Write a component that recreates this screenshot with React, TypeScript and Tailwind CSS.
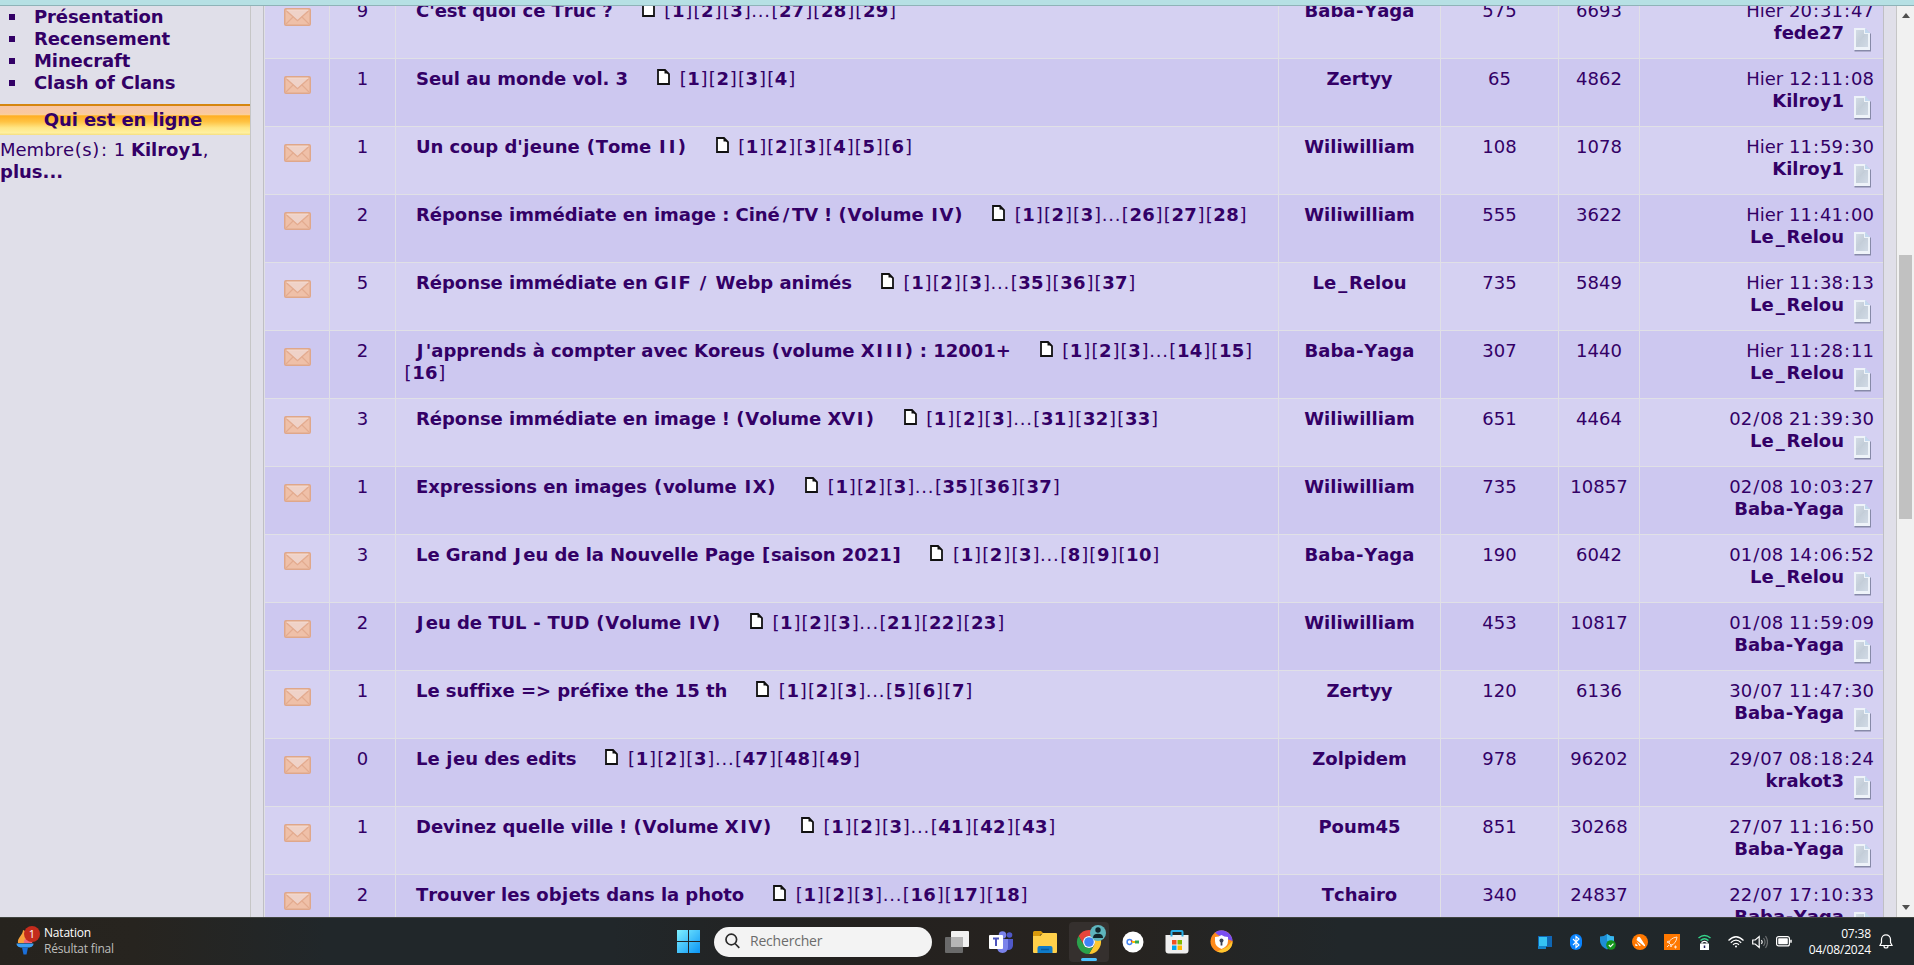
import React from 'react'

type Topic = {
  replies: number
  title: string
  pages: (number | string)[]
  author: string
  posts: number
  views: number
  date: string
  last: string
}

const topics: Topic[] = [
  { replies: 9, title: "C'est quoi ce Truc ?", pages: [1, 2, 3, '...', 27, 28, 29], author: 'Baba-Yaga', posts: 575, views: 6693, date: 'Hier 20:31:47', last: 'fede27' },
  { replies: 1, title: 'Seul au monde vol. 3', pages: [1, 2, 3, 4], author: 'Zertyy', posts: 65, views: 4862, date: 'Hier 12:11:08', last: 'Kilroy1' },
  { replies: 1, title: "Un coup d'jeune (Tome II)", pages: [1, 2, 3, 4, 5, 6], author: 'Wiliwilliam', posts: 108, views: 1078, date: 'Hier 11:59:30', last: 'Kilroy1' },
  { replies: 2, title: 'Réponse immédiate en image : Ciné/TV ! (Volume IV)', pages: [1, 2, 3, '...', 26, 27, 28], author: 'Wiliwilliam', posts: 555, views: 3622, date: 'Hier 11:41:00', last: 'Le_Relou' },
  { replies: 5, title: 'Réponse immédiate en GIF / Webp animés', pages: [1, 2, 3, '...', 35, 36, 37], author: 'Le_Relou', posts: 735, views: 5849, date: 'Hier 11:38:13', last: 'Le_Relou' },
  { replies: 2, title: "J'apprends à compter avec Koreus (volume XIII) : 12001+", pages: [1, 2, 3, '...', 14, 15, 16], author: 'Baba-Yaga', posts: 307, views: 1440, date: 'Hier 11:28:11', last: 'Le_Relou' },
  { replies: 3, title: 'Réponse immédiate en image ! (Volume XVI)', pages: [1, 2, 3, '...', 31, 32, 33], author: 'Wiliwilliam', posts: 651, views: 4464, date: '02/08 21:39:30', last: 'Le_Relou' },
  { replies: 1, title: 'Expressions en images (volume IX)', pages: [1, 2, 3, '...', 35, 36, 37], author: 'Wiliwilliam', posts: 735, views: 10857, date: '02/08 10:03:27', last: 'Baba-Yaga' },
  { replies: 3, title: 'Le Grand Jeu de la Nouvelle Page [saison 2021]', pages: [1, 2, 3, '...', 8, 9, 10], author: 'Baba-Yaga', posts: 190, views: 6042, date: '01/08 14:06:52', last: 'Le_Relou' },
  { replies: 2, title: 'Jeu de TUL - TUD (Volume IV)', pages: [1, 2, 3, '...', 21, 22, 23], author: 'Wiliwilliam', posts: 453, views: 10817, date: '01/08 11:59:09', last: 'Baba-Yaga' },
  { replies: 1, title: 'Le suffixe => préfixe the 15 th', pages: [1, 2, 3, '...', 5, 6, 7], author: 'Zertyy', posts: 120, views: 6136, date: '30/07 11:47:30', last: 'Baba-Yaga' },
  { replies: 0, title: 'Le jeu des edits', pages: [1, 2, 3, '...', 47, 48, 49], author: 'Zolpidem', posts: 978, views: 96202, date: '29/07 08:18:24', last: 'krakot3' },
  { replies: 1, title: 'Devinez quelle ville ! (Volume XIV)', pages: [1, 2, 3, '...', 41, 42, 43], author: 'Poum45', posts: 851, views: 30268, date: '27/07 11:16:50', last: 'Baba-Yaga' },
  { replies: 2, title: 'Trouver les objets dans la photo', pages: [1, 2, 3, '...', 16, 17, 18], author: 'Tchairo', posts: 340, views: 24837, date: '22/07 17:10:33', last: 'Baba-Yaga' },
]

const boldSpacing: Record<string, string> = {
  I: 'px-[1.55px]',
  J: 'pl-[0.8px] pr-[2.4px]',
  j: 'px-[0.5px]',
  '(': 'px-[0.75px]',
  ')': 'px-[0.75px]',
  '[': 'px-[0.75px]',
  ']': 'px-[0.75px]',
  '/': 'px-[2.9px]',
  '-': 'px-[0.6px]',
  _: 'tracking-[1.9px] pl-[1.9px]',
  '!': '-mx-[0.5px]',
}

const regularSpacing: Record<string, string> = {
  '(': 'px-[0.6px]',
  ')': 'px-[0.6px]',
  '[': 'px-[0.58px]',
  ']': 'px-[0.58px]',
  '/': 'px-[1.05px]',
  ':': 'px-[1.05px]',
}

function Text({ children, bold }: { children: string; bold?: boolean }) {
  const spacing = bold ? boldSpacing : regularSpacing
  const parts = children.split(bold ? /([IJj()[\]/\-_!])/ : /([()[\]/:])/)
  return (
    <span className={bold ? 'font-bold' : 'font-normal'}>
      {parts.map((part, i) => (spacing[part] ? <span key={i} className={spacing[part]}>{part}</span> : part))}
    </span>
  )
}

function Envelope() {
  return (
    <svg width="27" height="18" viewBox="0 0 27 18">
      <rect x="0.75" y="0.75" width="25.5" height="16.5" rx="1.2" fill="#efc0a8" stroke="#dfa78a" strokeWidth="1.5" />
      <path d="M2 16 9.5 8.5M25 16 17.5 8.5" stroke="#e3ab90" strokeWidth="1.2" />
      <path d="M3 2.5h21L13.5 12z" fill="#efd2c8" />
      <path d="M2.5 3 13.5 12.8 24.5 3" fill="none" stroke="#e3ab90" strokeWidth="1.2" />
      <path d="M3 2.2h21" stroke="#f3ddd6" />
    </svg>
  )
}

function PageIcon() {
  return (
    <svg className="inline-block align-baseline" width="13" height="16" viewBox="0 0 13 16">
      <path d="M1 1h7l4 4v10H1z" fill="#fff" stroke="#111" strokeWidth="1.8" />
      <path d="M7.500 1v3.500H12z" fill="#111" />
    </svg>
  )
}

function LastPostIcon() {
  return (
    <svg width="19" height="25" viewBox="0 0 19 25">
      <defs>
        <linearGradient id="sheet" x1="0" y1="0" x2="1" y2="1">
          <stop offset="0" stopColor="#d3dce6" />
          <stop offset="0.5" stopColor="#c3cdd8" />
          <stop offset="1" stopColor="#e0e8f3" />
        </linearGradient>
      </defs>
      <path d="M1.500 2h11.500l5 5v17.500H1.500z" fill="#878aa8" />
      <path d="M1 1h11l5 5v17H1z" fill="#eef3f9" />
      <path d="M3 3h8v4h4v13H3z" fill="url(#sheet)" />
      <path d="M3 14c5 0 8-3 9-7h3v13H3z" fill="#c6d1dc" opacity="0.6" />
      <path d="M12 1v5h5z" fill="#c3d8ef" />
    </svg>
  )
}

function TopicRow({ topic, odd }: { topic: Topic; odd: boolean }) {
  const bg = odd ? 'bg-[#cdc8f0]' : 'bg-[#d5d1f2]'
  return (
    <div className="grid h-[68px] shrink-0 grid-cols-[64px_65px_882px_161px_117px_80px_243px] gap-x-px pb-px">
      <div className={`flex justify-center pt-[17px] ${bg}`}>
        <Envelope />
      </div>
      <div className={`pt-[9px] text-center ${bg}`}>{topic.replies}</div>
      <div className={`pt-[9px] pr-2 pl-2 ${bg}`}>
        <span className="pl-3 tracking-[-0.04px]"><Text bold>{topic.title}</Text></span>
        <span className="pr-[9px] pl-[29px]"><PageIcon /></span>
        {topic.pages.map((p, i) =>
          typeof p === 'string' ? (
            <span key={i} className="tracking-[0.8px]">{p}</span>
          ) : (
            <span key={i} className="inline-block">
              <Text>[</Text>
              <b className="tracking-[0.27px]">{p}</b>
              <Text>]</Text>
            </span>
          ),
        )}
      </div>
      <div className={`pt-[9px] text-center ${bg}`}><Text bold>{topic.author}</Text></div>
      <div className={`pt-[9px] text-center ${bg}`}>{topic.posts}</div>
      <div className={`pt-[9px] text-center ${bg}`}>{topic.views}</div>
      <div className={`flex flex-col items-end pt-[9px] pr-[9px] ${bg}`}>
        <Text>{topic.date}</Text>
        <div className="flex gap-[9px] pr-[2px]">
          <Text bold>{topic.last}</Text>
          <div className="pt-[5px]"><LastPostIcon /></div>
        </div>
      </div>
    </div>
  )
}

function Sidebar() {
  return (
    <aside className="w-[251px] shrink-0 border-r border-[#c6c6c6]">
      <ul className="font-bold tracking-[-0.1px]">
        {['Présentation', 'Recensement', 'Minecraft', 'Clash of Clans'].map((item) => (
          <li key={item} className="flex h-[22px] items-center gap-[19px] pl-[9px]">
            <span className="size-1.5 bg-[#330066]" />
            {item}
          </li>
        ))}
      </ul>
      <h2 className="mt-[10px] h-[31px] border-t-2 border-[#d5860f] bg-[linear-gradient(#f8c6a4_0,#f9c9a0_25%,#fcd096_30%,#ffae22_34%,#ffc445_55%,#ffe684_75%,#fff0a0_92%,#f5de80)] pr-1 text-center leading-[28px] font-bold tracking-[-0.1px]">
        Qui est en ligne
      </h2>
      <p className="pt-[4px]">
        <Text>Membre(s): 1 </Text><b>Kilroy1</b>,<br />
        <b>plus...</b>
      </p>
    </aside>
  )
}

function Scrollbar() {
  return (
    <div className="flex w-[17px] shrink-0 flex-col items-center bg-[#f1f1f1] pt-[7px] pb-[7px]">
      <svg width="8" height="5" viewBox="0 0 8 5"><path d="M0 5 4 0l4 5z" fill="#505050" /></svg>
      <div className="mt-[237px] h-[264px] w-[13px] bg-[#c1c1c1]" />
      <svg className="mt-auto" width="8" height="5" viewBox="0 0 8 5"><path d="M0 0h8L4 5z" fill="#505050" /></svg>
    </div>
  )
}

function Torch() {
  return (
    <svg width="18" height="26" viewBox="0 0 18 26">
      <path d="M2 14C1 9 7 6 7 1c5 2 4 5 7 7 2 2 3 4 2 6z" fill="#f9a03c" />
      <path d="M8 14c-1-4 4-5 4-8 3 2 5 5 4 8z" fill="#f2667a" />
      <path d="M0.500 14.500h17c0 3-3 4-5 4h-7c-2 0-5-1-5-4z" fill="#3d9df2" />
      <path d="M6 18.500h6l-1.500 7h-3z" fill="#1b6fd8" />
    </svg>
  )
}

function WindowsLogo() {
  return (
    <svg width="23" height="23" viewBox="0 0 23 23">
      <defs>
        <linearGradient id="win" x1="0" y1="0" x2="23" y2="23" gradientUnits="userSpaceOnUse">
          <stop offset="0" stopColor="#7ff0ff" />
          <stop offset="1" stopColor="#0a94f5" />
        </linearGradient>
      </defs>
      <path d="M0 0h11v11H0zM12 0h11v11H12zM0 12h11v11H0zM12 12h11v11H12z" fill="url(#win)" />
    </svg>
  )
}

function TaskView() {
  return (
    <svg width="24" height="22" viewBox="0 0 24 22">
      <rect x="6" y="0" width="18" height="16" rx="1" fill="#f1f1f1" />
      <rect x="0" y="6" width="18" height="16" rx="1" fill="#6a6a6a" />
      <path d="M6 6h12v10H6z" fill="#b5b5b5" />
    </svg>
  )
}

function Teams() {
  return (
    <svg width="24" height="22" viewBox="0 0 24 22">
      <circle cx="13.500" cy="4" r="3.800" fill="#7b83eb" />
      <circle cx="20.500" cy="4" r="2.800" fill="#5059c9" />
      <path d="M16 8h8v6c0 3-2 5-5 5h-3z" fill="#5059c9" />
      <path d="M8 8h11v8c0 3-2 6-5.500 6S8 19 8 16z" fill="#7b83eb" />
      <rect x="0" y="4" width="14" height="14" rx="1" fill="#fff" />
      <path d="M4 7.500h6M7 7.500v7.500" stroke="#4b53bc" strokeWidth="2" />
    </svg>
  )
}

function Folder() {
  return (
    <svg width="24" height="22" viewBox="0 0 24 22">
      <path d="M0 1.500Q0 0 1.500 0H8l3 3h-3l-2 3H0z" fill="#d99a0b" />
      <path d="M0 5h7l3-3h13q1 0 1 1v18q0 1-1 1H1q-1 0-1-1z" fill="#ffd04a" />
      <path d="M4.500 22v-5q0-2 2-2h11q2 0 2 2v5z" fill="#0f7bc9" />
      <path d="M8 18.500h8" stroke="#075a9c" strokeWidth="1.500" />
    </svg>
  )
}

function Chrome() {
  return (
    <svg className="mt-[2px] overflow-visible" width="24" height="24" viewBox="0 0 24 24">
      <path d="M1.600 6A12 12 0 0 1 22.400 6H12a6 6 0 0 0-5.200 9z" fill="#e8453c" />
      <path d="M22.400 6A12 12 0 0 1 12 24l5.200-9A6 6 0 0 0 12 6z" fill="#fdc72e" />
      <path d="M12 24A12 12 0 0 1 1.600 6l5.200 9a6 6 0 0 0 10.400 0z" fill="#2ba24c" />
      <circle cx="12" cy="12" r="6" fill="#fff" />
      <circle cx="12" cy="12" r="4.800" fill="#3f83f8" />
      <circle cx="21" cy="3" r="8" fill="#5eb5be" />
      <circle cx="21" cy="0" r="2.700" fill="#12262b" />
      <path d="M16 8q0-4.200 5-4.200T26 8z" fill="#12262b" />
    </svg>
  )
}

function KeyApp() {
  return (
    <svg width="22" height="22" viewBox="0 0 22 22">
      <circle cx="11" cy="11" r="10.500" fill="#fff" />
      <circle cx="7.500" cy="11" r="2.400" fill="none" stroke="#4285f4" strokeWidth="1.500" />
      <path d="M9.300 9.400a2.400 2.400 0 0 1 .6 1.600" fill="none" stroke="#ea4335" strokeWidth="1.500" />
      <path d="M10 11h3" stroke="#fbbc04" strokeWidth="2" />
      <path d="M13 11h4" stroke="#34a853" strokeWidth="3" />
    </svg>
  )
}

function Store() {
  return (
    <svg width="24" height="24" viewBox="0 0 24 24">
      <path d="M.5 5h23v15.500q0 3-3 3h-17q-3 0-3-3z" fill="#efefef" />
      <path d="M6.500 6.500V2q0-1 1-1h9q1 0 1 1v4.500" fill="none" stroke="#27aee8" strokeWidth="2" />
      <path d="M7 10h4.500v4.500H7z" fill="#f25022" />
      <path d="M12.500 10H17v4.500h-4.500z" fill="#7fba00" />
      <path d="M7 15.500h4.500V20H7z" fill="#00a4ef" />
      <path d="M12.500 15.500H17V20h-4.500z" fill="#ffb900" />
    </svg>
  )
}

function SecureBrowser() {
  return (
    <svg width="23" height="23" viewBox="0 0 23 23">
      <circle cx="11.500" cy="11.500" r="11" fill="#ff8a1c" />
      <path d="M5 2.500A11 11 0 0 1 22.500 11L17 9 8 5z" fill="#7a4ff2" />
      <path d="M22.500 11A11 11 0 0 1 7 21.500L17 17z" fill="#ffc72e" />
      <path d="M5 7q4 0 6.500-2 2.500 2 6.500 2v4q0 5.500-6.500 8Q5 16.500 5 11z" fill="#fff" />
      <circle cx="11.500" cy="10.500" r="2" fill="#3b3f52" />
      <path d="M11.500 10.500v5" stroke="#3b3f52" strokeWidth="1.800" />
    </svg>
  )
}

function Cell({ children, active }: { children: React.ReactNode; active?: boolean }) {
  return (
    <div className="flex w-11 justify-center">
      {active ? (
        <div className="flex h-10 w-10 flex-col items-center justify-between rounded bg-[#35302e] pt-[6px] pb-px">
          {children}
          <span className="h-[3px] w-4 rounded-full bg-[#4cc2ff]" />
        </div>
      ) : (
        children
      )}
    </div>
  )
}

function Tray() {
  return (
    <div className="ml-auto flex items-center">
      <div className="flex w-8 justify-center">
        <svg width="15" height="14" viewBox="0 0 15 14"><path d="M1 1h14v11H1z" fill="#0f67b4" /><path d="M2 2h8v9H2z" fill="#35c3f3" /><path d="M1 11h8v3H1z" fill="#1583c9" /></svg>
      </div>
      <div className="flex w-8 justify-center">
        <svg width="12" height="16" viewBox="0 0 12 16"><rect width="12" height="16" rx="6" fill="#0a84ff" /><path d="m3 5 6 6-3 2.500v-11L9 5l-6 6" fill="none" stroke="#fff" strokeWidth="1.100" /></svg>
      </div>
      <div className="flex w-8 justify-center">
        <svg width="16" height="16" viewBox="0 0 16 16"><path d="M0 2.500q4 0 7-2.500 3 2.500 7 2.500V7q0 5-7 8.500Q0 12 0 7z" fill="#1e8fd5" /><path d="M7 0q3 2.500 7 2.500V7H7z" fill="#39b8ef" /><circle cx="11" cy="11" r="4.800" fill="#15941c" /><path d="m8.800 11 1.700 1.700 2.900-3" fill="none" stroke="#fff" strokeWidth="1.200" /></svg>
      </div>
      <div className="flex w-8 justify-center">
        <svg width="16" height="16" viewBox="0 0 16 16"><circle cx="8" cy="8" r="8" fill="#ff7800" /><path d="M5.500 3.500Q7 2 8.500 4L13 11q.5 1.500-1 1L4.500 6z" fill="#fff" /><path d="M4.300 7.300 9 11.200 7.500 12z" fill="#fff" /><path d="M3.700 9.500 6 12H4q-1.500 0-.3-2.500z" fill="#fff" /></svg>
      </div>
      <div className="flex w-8 justify-center">
        <svg width="16" height="16" viewBox="0 0 16 16"><path d="M0 0h16v16H0z" fill="#ff7800" /><path d="M5 9q1-5 8-6-1 7-6 8zM5 7 3 8l2 1M8 11l-1 2-1-2M3 13l2-2M10 13h3M11.500 11.500v3" fill="none" stroke="#ffe3cc" /></svg>
      </div>
      <div className="flex w-8 justify-center">
        <svg width="13" height="16" viewBox="0 0 13 16"><path d="M.5 4q6-5 12 0M2.500 6.500q4-3.500 8 0" fill="none" stroke="#35d48b" strokeWidth="1.500" /><path d="M2 9.500h9V16H2z" fill="#fff" /><path d="M4 9.500V8.300q2.500-2 5 0v1.200" fill="none" stroke="#fff" strokeWidth="1.300" /><path d="M6.500 11.500V14" stroke="#25215c" strokeWidth="1.500" /></svg>
      </div>
      <div className="ml-1 flex w-6 justify-center">
        <svg width="16" height="12" viewBox="0 0 16 12" fill="none" stroke="#fff" strokeWidth="1.200"><path d="M.5 4.500q7.500-7.500 15 0M2.800 6.700q5.200-5 10.400 0M5 8.800q3-2.800 6 0" /><circle cx="8" cy="10.500" r="1" fill="#fff" stroke="none" /></svg>
      </div>
      <div className="flex w-6 justify-center">
        <svg width="16" height="14" viewBox="0 0 16 14" fill="none" strokeWidth="1.200"><path d="M.7 5h2.500l4-3.500v11L3.200 9H.7zM9.500 5q1.500 2 0 4" stroke="#fff" /><path d="M11.500 3q3 4 0 8M13.500 1q4 6 0 12" stroke="#6d7072" /></svg>
      </div>
      <div className="flex w-6 justify-center">
        <svg width="16" height="11" viewBox="0 0 16 11"><rect x=".6" y=".6" width="12.800" height="9.300" rx="2" fill="none" stroke="#fff" strokeWidth="1.200" /><rect x="2.200" y="2.200" width="9.600" height="6.100" rx=".7" fill="#fff" /><path d="M15 3.800v3" stroke="#fff" strokeWidth="1.500" /></svg>
      </div>
      <div className="w-[75px] text-right font-['Open_Sans',sans-serif] text-[12px] leading-4 tracking-[-0.15px] text-white">
        <div>07:38</div>
        <div>04/08/2024</div>
      </div>
      <svg className="mr-[21px] ml-[8px]" width="14" height="15" viewBox="0 0 14 15" fill="none" stroke="#fff" strokeWidth="1.200"><path d="M1 11.500h12l-1.500-3V5.300a4.500 4.500 0 0 0-9 0v3.200zM5 12a2 2 0 0 0 4 0" /></svg>
    </div>
  )
}

function Taskbar() {
  return (
    <footer className="flex h-12 shrink-0 items-center border-t border-[#40443f] bg-[linear-gradient(90deg,#26231e_0,#27241f_7%,#21272a_17%,#21272a_32%,#24211f_45%,#27231f_58%,#21272a_70%,#20272a)] font-['Open_Sans',sans-serif]">
      <div className="flex w-[666px] items-center pl-4">
        <div className="relative">
          <Torch />
          <span className="absolute -top-[3px] left-2 flex size-4 items-center justify-center rounded-full bg-[#c42b1c] text-[11px] leading-none text-white">1</span>
        </div>
        <div className="ml-[10px] -mt-px text-[12px] leading-4 tracking-[-0.2px]">
          <div className="text-white">Natation</div>
          <div className="text-[#bdbdbb]">Résultat final</div>
        </div>
      </div>
      <Cell><WindowsLogo /></Cell>
      <div className="mr-[3px] ml-1 flex h-[30px] w-[218px] items-center gap-[10px] rounded-full bg-[#f3f3f3] pb-px pl-[11px] text-[14px] tracking-[-0.2px] text-[#6b6b6b]">
        <svg width="15" height="16" viewBox="0 0 15 16" fill="none" stroke="#2b2b2b" strokeWidth="1.700"><circle cx="6.300" cy="6.500" r="5.300" /><path d="m10 10.500 4.300 4.300" /></svg>
        Rechercher
      </div>
      <Cell><TaskView /></Cell>
      <Cell><Teams /></Cell>
      <Cell><Folder /></Cell>
      <Cell active><Chrome /></Cell>
      <Cell><KeyApp /></Cell>
      <Cell><Store /></Cell>
      <Cell><SecureBrowser /></Cell>
      <Tray />
    </footer>
  )
}

export default function App() {
  return (
    <div className="flex h-[965px] w-[1914px] flex-col overflow-hidden bg-[#e0dfe9] font-['DejaVu_Sans',Verdana,sans-serif] text-[18px] leading-[22px] text-[#330066] [font-kerning:none] [font-variant-ligatures:none]">
      <div className="h-1.5 shrink-0 border-b border-[#8fb3b8] bg-[#b6e0e4]" />
      <div className="flex min-h-0 flex-1 overflow-hidden">
        <Sidebar />
        <main className="ml-3 w-[621px] flex-1 overflow-hidden border-x border-[#bfbfc4] bg-[#e0e0e6] pl-px">
          <div className="-mt-[15px] flex flex-col">
            {topics.map((topic, i) => (
              <TopicRow key={topic.title} topic={topic} odd={i % 2 === 1} />
            ))}
          </div>
        </main>
        <div className="w-[13px] shrink-0 border-r border-[#c6c6c6]" />
        <Scrollbar />
      </div>
      <Taskbar />
    </div>
  )
}
